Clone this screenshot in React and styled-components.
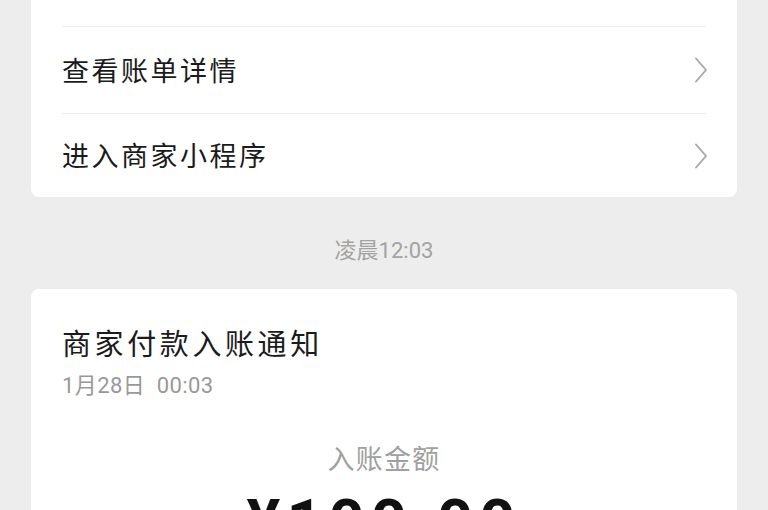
import styled, { createGlobalStyle } from 'styled-components'

const GlobalStyle = createGlobalStyle`
    html, body {
        margin: 0;
        padding: 0;
        background: #ededed;
    }

    body {
        font-family: Roboto, "Noto Sans CJK SC", "Noto Sans", sans-serif;
        -webkit-font-smoothing: antialiased;
    }
`

const Page = styled.div`
    height: 510px;
    overflow: hidden;
    background: #ededed;
`

const Card = styled.section`
    margin: 0 31px;
    padding: 0 31px;
    border-radius: 8px;
    background: #ffffff;

    &.clipped {
        margin-top: -40px;
    }
`

const CardTop = styled.div`
    height: 66px;
`

const Row = styled.div`
    display: flex;
    align-items: center;
    justify-content: space-between;

    height: 87px;
    border-top: 1px solid #ececec;
    box-sizing: border-box;

    &:last-child {
        height: 84px;
    }
`

const RowLabel = styled.span`
    margin-top: -2px;
    font-size: 27px;
    letter-spacing: 2.5px;
    color: #1b1b1b;
`

const Chevron = styled.svg`
    flex-shrink: 0;
    width: 14px;
    height: 26px;
    margin-right: -2px;

    path {
        fill: none;
        stroke: #a8a8a8;
        stroke-width: 1.9;
        stroke-linecap: round;
        stroke-linejoin: round;
    }
`

const TimeStamp = styled.p`
    margin: 0;
    padding: 39px 0 23px;
    line-height: 30px;
    text-align: center;
    font-size: 22px;
    color: #a3a3a3;
`

const Title = styled.h2`
    margin: 0;
    padding-top: 36px;
    line-height: 40px;
    font-size: 29px;
    font-weight: 400;
    letter-spacing: 3.6px;
    color: #1b1b1b;
`

const Meta = styled.div`
    margin-top: 6px;
    line-height: 30px;
    font-size: 22px;
    letter-spacing: 0.4px;
    color: #999999;
    white-space: pre;
`

const AmountLabel = styled.div`
    margin-top: 41px;
    line-height: 36px;
    text-align: center;
    font-size: 27px;
    letter-spacing: 1.2px;
    color: #a0a0a0;
`

const Amount = styled.div`
    margin-top: 8px;
    line-height: 74px;
    text-align: center;
    font-size: 63px;
    font-weight: 700;
    letter-spacing: 6px;
    color: #111111;
`

const ArrowRight = () => (
    <Chevron viewBox="0 0 14 26">
        <path d="M2 1.5 L12 13 L2 24.5" />
    </Chevron>
)

const LinkRow = ({ label }) => (
    <Row>
        <RowLabel>{label}</RowLabel>
        <ArrowRight />
    </Row>
)

export default function App() {
    return (
        <Page>
            <GlobalStyle />
            <Card className="clipped">
                <CardTop />
                <LinkRow label="查看账单详情" />
                <LinkRow label="进入商家小程序" />
            </Card>

            <TimeStamp>凌晨12:03</TimeStamp>

            <Card>
                <Title>商家付款入账通知</Title>
                <Meta>{'1月28日  00:03'}</Meta>
                <AmountLabel>入账金额</AmountLabel>
                <Amount>¥100.00</Amount>
            </Card>
        </Page>
    )
}
